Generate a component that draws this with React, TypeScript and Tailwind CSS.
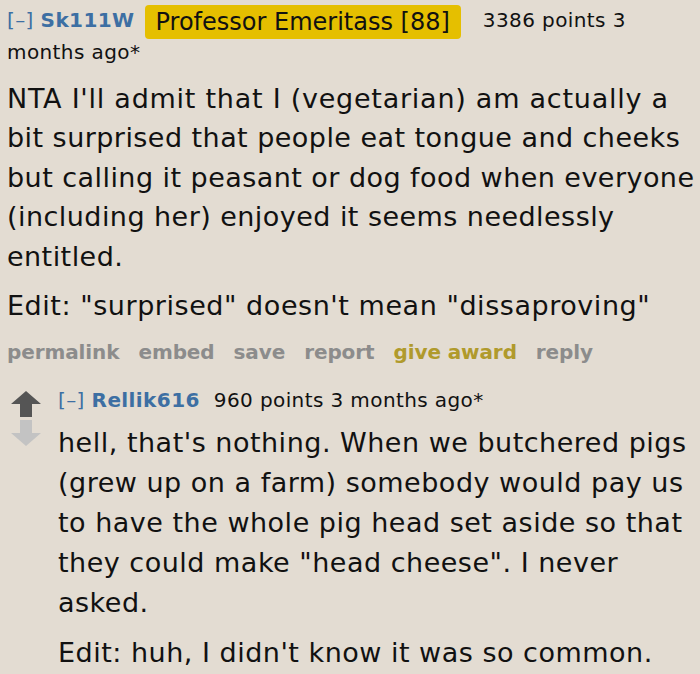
import React from "react";

const mainLines = [
  { t: "NTA I'll admit that I (vegetarian) am actually a", c: "tracking-[0.75px]" },
  { t: "bit surprised that people eat tongue and cheeks", c: "" },
  { t: "but calling it peasant or dog food when everyone", c: "" },
  { t: "(including her) enjoyed it seems needlessly", c: "" },
  { t: "entitled.", c: "" },
];

const replyLines = [
  "hell, that's nothing. When we butchered pigs",
  "(grew up on a farm) somebody would pay us",
  "to have the whole pig head set aside so that",
  'they could make "head cheese". I never',
  "asked.",
];

export default function App() {
  const font = { fontFamily: '"DejaVu Sans", Verdana, sans-serif' };
  return (
    <div className="w-[700px] h-[674px] bg-[#e3dcd2] text-[#111] overflow-hidden" style={font}>
      <div className="pl-[7px] pt-[5px]">
        <div className="text-[20px] leading-[30px] tracking-[0.4px] pr-1">
          <span className="text-[#3d6fa3]">[–] </span>
          <span className="text-[#3d6fa3] font-bold">Sk111W</span>
          <span className="inline-block ml-[10px] mr-[22px] my-[-2px] bg-[#e5bf00] rounded-[4px] px-[11px] text-[24px] leading-[34px] align-middle tracking-[0px]">Professor Emeritass [88]</span>
          <span>3386 points 3 months ago*</span>
        </div>
        <div className="text-[27px] leading-[39.5px] tracking-[0.45px] mt-[12px] whitespace-nowrap">
          <p>
            {mainLines.map((l, i) => (
              <span key={i} className={"block " + l.c}>{l.t}</span>
            ))}
          </p>
          <p className="mt-[10px] tracking-[0.55px]">Edit: "surprised" doesn't mean "dissaproving"</p>
        </div>
        <div className="flex gap-[19px] text-[20px] font-bold text-[#8c8c8c] mt-[11px] leading-[30px] tracking-[-0.1px]">
          <span>permalink</span>
          <span>embed</span>
          <span>save</span>
          <span>report</span>
          <span className="text-[#b09a2c]">give award</span>
          <span>reply</span>
        </div>
        <div className="flex mt-[18px]">
          <div className="w-[51px] shrink-0 flex flex-col items-center pt-[6px] pr-[14px]">
            <svg width="30" height="26" viewBox="0 0 30 26">
              <polygon points="15,0 30,13 21,13 21,26 9,26 9,13 0,13" fill="#555" />
            </svg>
            <svg width="30" height="26" viewBox="0 0 30 26" className="mt-[3px]">
              <polygon points="9,0 21,0 21,13 30,13 15,26 0,13 9,13" fill="#c3c3c3" />
            </svg>
          </div>
          <div className="flex-1 pr-1">
            <div className="text-[20px] leading-[30px] tracking-[0.4px]">
              <span className="text-[#3d6fa3]">[–] </span>
              <span className="text-[#3d6fa3] font-bold">Rellik616</span>
              <span className="ml-[14px]">960 points 3 months ago*</span>
            </div>
            <div className="text-[27px] leading-[40.2px] tracking-[0.5px] mt-[8px] whitespace-nowrap">
              <p>
                {replyLines.map((l, i) => (
                  <span key={i} className="block">{l}</span>
                ))}
              </p>
              <p className="mt-[9px]">Edit: huh, I didn't know it was so common.</p>
            </div>
          </div>
        </div>
      </div>
    </div>
  );
}
